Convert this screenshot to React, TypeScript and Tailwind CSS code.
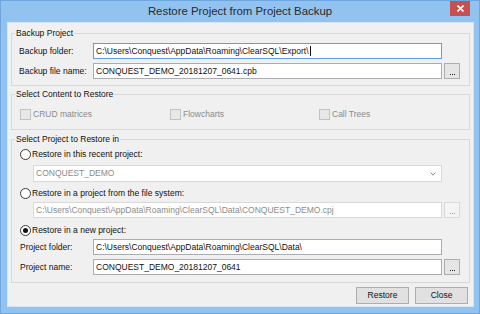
import React from "react";

function Field({
  text,
  w = "w-[349px]",
  h = "h-[16px]",
  disabled = false,
  focused = false,
  children,
}: {
  text: string;
  w?: string;
  h?: string;
  disabled?: boolean;
  focused?: boolean;
  children?: React.ReactNode;
}) {
  const border = focused
    ? "border-[#5a9fe2]"
    : disabled
    ? "border-[#d9d9d9]"
    : "border-[#abadb3]";
  const color = disabled ? "text-[#8b8b8b]" : "text-[#111]";
  return (
    <div
      className={`${w} ${h} shrink-0 border ${border} ${color} bg-white pl-[2px] flex items-center whitespace-nowrap overflow-hidden`}
    >
      {text}
      {children}
    </div>
  );
}

function Dots({ disabled = false }: { disabled?: boolean }) {
  return (
    <div
      className={`w-[16px] h-[16px] shrink-0 border flex items-end justify-center pb-[3px] ${
        disabled
          ? "border-[#d9d9d9] bg-[#f4f4f4]"
          : "border-[#adadad] bg-[#e5e5e5]"
      }`}
    >
      <div className="flex gap-[1px]">
        <span className={`w-[1px] h-[1px] ${disabled ? "bg-[#9a9a9a]" : "bg-[#222]"}`} />
        <span className={`w-[1px] h-[1px] ${disabled ? "bg-[#9a9a9a]" : "bg-[#222]"}`} />
        <span className={`w-[1px] h-[1px] ${disabled ? "bg-[#9a9a9a]" : "bg-[#222]"}`} />
      </div>
    </div>
  );
}

function Radio({ label, checked = false }: { label: string; checked?: boolean }) {
  return (
    <div className="h-[12px] flex items-center">
      <div className="w-[11px] h-[11px] rounded-full border border-[#3a3a3a] bg-white flex items-center justify-center">
        {checked && <div className="w-[5px] h-[5px] rounded-full bg-[#111]" />}
      </div>
      <span className="ml-[1px] text-[#111]">{label}</span>
    </div>
  );
}

function Check({ label }: { label: string }) {
  return (
    <div className="h-[11px] flex items-center">
      <div className="w-[11px] h-[11px] border border-[#c2c2c2] bg-[#e8e8e8]" />
      <span className="ml-[2px] text-[#8b8b8b]">{label}</span>
    </div>
  );
}

export default function App() {
  return (
    <div className="w-[480px] h-[314px] bg-[#92c2ef] border border-[#6fa6dd] flex flex-col font-['Liberation_Sans',Arial,sans-serif] text-[8.5px] leading-none text-[#111] overflow-hidden">
      {/* Title bar */}
      <div className="h-[21px] shrink-0 grid grid-cols-[1fr_auto_1fr] items-start">
        <div />
        <div className="pt-[5px] text-[11.4px] text-[#2a2a2a] whitespace-nowrap">
          Restore Project from Project Backup
        </div>
        <div className="flex justify-end pr-[9px]">
          <div className="w-[20px] h-[15px] bg-[#c75050] flex items-center justify-center">
            <svg width="7" height="7" viewBox="0 0 7 7">
              <path d="M0.5 0.5 L6.5 6.5 M6.5 0.5 L0.5 6.5" stroke="#fff" strokeWidth="1.6" />
            </svg>
          </div>
        </div>
      </div>

      {/* Client area */}
      <div className="flex-1 ml-[6px] mr-[5px] mb-[6px] border border-[#d3e5f7] bg-[#f0f0f0] px-[3px] pt-[4px] flex flex-col">
        {/* Backup Project */}
        <fieldset className="border border-[#d8d8d8] min-w-0">
          <legend className="ml-[3px] px-[1px] h-[13px] leading-[13px]">Backup Project</legend>
          <div className="pt-[3px] pb-[6px] pl-[7px] pr-[9px] flex flex-col gap-[4px]">
            <div className="flex items-center">
              <span className="w-[74px] shrink-0">Backup folder:</span>
              <Field text="C:\Users\Conquest\AppData\Roaming\ClearSQL\Export\" focused>
                <span className="ml-[1px] w-[1px] h-[10px] bg-[#111]" />
              </Field>
              <div className="w-[18px] shrink-0" />
            </div>
            <div className="flex items-center gap-[2px]">
              <span className="w-[72px] shrink-0">Backup file name:</span>
              <Field text="CONQUEST_DEMO_20181207_0641.cpb" />
              <Dots />
            </div>
          </div>
        </fieldset>

        {/* Select Content */}
        <fieldset className="mt-[2px] border border-[#d8d8d8] min-w-0">
          <legend className="ml-[3px] px-[1px] h-[13px] leading-[13px]">Select Content to Restore</legend>
          <div className="pt-[8px] pb-[9px] pl-[8px] grid grid-cols-[150px_149px_1fr]">
            <Check label="CRUD matrices" />
            <Check label="Flowcharts" />
            <Check label="Call Trees" />
          </div>
        </fieldset>

        {/* Select Project */}
        <fieldset className="mt-[3px] border border-[#d8d8d8] min-w-0">
          <legend className="ml-[3px] px-[1px] h-[13px] leading-[13px]">Select Project to Restore in</legend>
          <div className="pt-[2px] pb-[7px] pl-[8px] pr-[9px] flex flex-col">
            <Radio label="Restore in this recent project:" />
            <div className="mt-[5px] pl-[13px] flex">
              <Field text="CONQUEST_DEMO" w="w-[409px]" h="h-[17px]" disabled>
                <div className="flex-1" />
                <svg width="6" height="4" viewBox="0 0 6 4" className="mr-[5px]">
                  <path d="M0.5 0.5 L3 3.2 L5.5 0.5" stroke="#8a8a8a" strokeWidth="1" fill="none" />
                </svg>
              </Field>
            </div>
            <div className="mt-[5px]">
              <Radio label="Restore in a project from the file system:" />
            </div>
            <div className="mt-[3px] pl-[13px] flex gap-[2px]">
              <Field
                text="C:\Users\Conquest\AppData\Roaming\ClearSQL\Data\CONQUEST_DEMO.cpj"
                w="w-[409px]"
                disabled
              />
              <Dots disabled />
            </div>
            <div className="mt-[6px]">
              <Radio label="Restore in a new project:" checked />
            </div>
            <div className="mt-[3px] flex items-center">
              <span className="w-[73px] shrink-0">Project folder:</span>
              <Field text="C:\Users\Conquest\AppData\Roaming\ClearSQL\Data\" />
            </div>
            <div className="mt-[4px] flex items-center gap-[2px]">
              <span className="w-[71px] shrink-0">Project name:</span>
              <Field text="CONQUEST_DEMO_20181207_0641" />
              <Dots />
            </div>
          </div>
        </fieldset>

        {/* Buttons */}
        <div className="mt-[4px] pr-[2px] flex justify-end gap-[6px]">
          <div className="w-[53px] h-[17px] border border-[#adadad] bg-[#e1e1e1] flex items-center justify-center">
            Restore
          </div>
          <div className="w-[53px] h-[17px] border border-[#adadad] bg-[#e1e1e1] flex items-center justify-center">
            Close
          </div>
        </div>
      </div>
    </div>
  );
}
